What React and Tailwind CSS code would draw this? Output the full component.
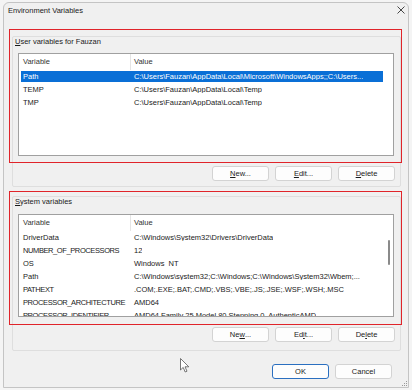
const userVars = [
  { name: 'Path', value: 'C:\\Users\\Fauzan\\AppData\\Local\\Microsoft\\WindowsApps;;C:\\Users...', selected: true },
  { name: 'TEMP', value: 'C:\\Users\\Fauzan\\AppData\\Local\\Temp' },
  { name: 'TMP', value: 'C:\\Users\\Fauzan\\AppData\\Local\\Temp' },
];

const systemVars = [
  { name: 'DriverData', value: 'C:\\Windows\\System32\\Drivers\\DriverData' },
  { name: 'NUMBER_OF_PROCESSORS', value: '12' },
  { name: 'OS', value: 'Windows_NT' },
  { name: 'Path', value: 'C:\\Windows\\system32;C:\\Windows;C:\\Windows\\System32\\Wbem;...' },
  { name: 'PATHEXT', value: '.COM;.EXE;.BAT;.CMD;.VBS;.VBE;.JS;.JSE;.WSF;.WSH;.MSC' },
  { name: 'PROCESSOR_ARCHITECTURE', value: 'AMD64' },
  { name: 'PROCESSOR_IDENTIFIER', value: 'AMD64 Family 25 Model 80 Stepping 0, AuthenticAMD' },
];

const Button = ({ children, primary }) => (
  <div
    className={
      'w-[57px] h-[15px] flex items-center justify-center rounded-[3px] bg-[#fdfdfd] text-[#1b1b1b] ' +
      (primary ? 'border border-[#2a6fc0]' : 'border border-[#d3d3d3]')
    }
  >
    {children}
  </div>
);

const isCaps = (s) => s === s.toUpperCase() && s.length > 4;

const VarList = ({ rows, scrollbar }) => (
  <div className="mt-[6px] h-[103px] w-[376px] border border-[#a0a0a0] bg-white flex overflow-hidden">
    <div className="w-[364px] pl-[2px] flex flex-col">
      {/* header */}
      <div className="h-[16px] shrink-0 flex text-[#333]">
        <div className="w-[109px] pl-[2px] flex items-center">Variable</div>
        <div className="flex-1 border-l border-[#e5e5e5] pl-[3px] flex items-center">Value</div>
      </div>
      {rows.map((r) => (
        <div key={r.name} className="h-[13px] shrink-0 py-[1px]">
          <div
            className={
              'h-[11px] flex items-center whitespace-nowrap overflow-hidden ' +
              (r.selected ? 'bg-[#0a6fd6] text-white' : 'text-[#1b1b1b]')
            }
          >
            <div className={'w-[109px] shrink-0 pl-[2px] ' + (isCaps(r.name) ? 'tracking-[-0.4px]' : '')}>{r.name}</div>
            <div className="pl-[4px] overflow-hidden">{r.value}</div>
          </div>
        </div>
      ))}
    </div>
    <div className="flex-1">
      {scrollbar && <div className="ml-[5px] mt-[25px] w-[2px] h-[25px] rounded-full bg-[#8a8a8a]"></div>}
    </div>
  </div>
);

const GroupBox = ({ label, children, className }) => (
  <div className={'ml-[8px] w-[389px] border border-[#dedede] rounded-[2px] px-[5px] ' + className}>
    <div className="-ml-[3px] h-[10px] leading-[10px] text-[#1b1b1b]">{label}</div>
    {children}
  </div>
);

const App = () => {
  return (
    <div
      className="relative w-[412px] h-[390px] overflow-hidden bg-[#f4f4f4] text-[7.5px] leading-none"
      style={{ fontFamily: '"Liberation Sans", Arial, sans-serif' }}
    >
      <div className="ml-[3px] mt-[2px] w-[406px] h-[386px] border border-[#c4c4c4] rounded-t-[6px] bg-[#f0f0f0] flex flex-col">
        {/* title bar */}
        <div className="h-[15px] flex items-center justify-between pl-[4px] pr-[3px] text-[#1b1b1b]">
          <span>Environment Variables</span>
          <svg width="8" height="8" viewBox="0 0 8 8" className="mt-[-1px]">
            <path d="M0.5 0.5 L7.5 7.5 M7.5 0.5 L0.5 7.5" stroke="#333" strokeWidth="0.9" />
          </svg>
        </div>

        <GroupBox label={<><span className="underline">U</span>ser variables for Fauzan</>} className="mt-[18px] pb-[5px]">
          <VarList rows={userVars} />
          <div className="mt-[10px] flex justify-end gap-[6px]">
            <Button><span className="underline">N</span>ew...</Button>
            <Button><span className="underline">E</span>dit...</Button>
            <Button><span className="underline">D</span>elete</Button>
          </div>
        </GroupBox>

        <GroupBox label={<><span className="underline">S</span>ystem variables</>} className="mt-[9px] pb-[8px] [&>div:nth-child(2)]:mt-[7px]">
          <VarList rows={systemVars} scrollbar />
          <div className="mt-[10px] flex justify-end gap-[6px]">
            <Button>Ne<span className="underline">w</span>...</Button>
            <Button>Ed<span className="underline">i</span>t...</Button>
            <Button>De<span className="underline">l</span>ete</Button>
          </div>
        </GroupBox>

        <div className="mt-[13px] flex justify-end gap-[6px] pr-[16px]">
          <Button primary>OK</Button>
          <Button>Cancel</Button>
        </div>
      </div>

      {/* red annotation boxes */}
      <div className="absolute left-[9px] top-[29px] w-[393px] h-[134px] border border-[#e0242a] pointer-events-none"></div>
      <div className="absolute left-[9px] top-[191px] w-[393px] h-[134px] border border-[#e0242a] pointer-events-none"></div>

      {/* mouse cursor */}
      <svg className="absolute left-[180px] top-[358px]" width="10" height="15" viewBox="0 0 10 15">
        <path d="M0.5 0.5 L0.5 12 L3.2 9.4 L5.2 14 L7 13.2 L5 8.8 L8.8 8.8 Z" fill="#fff" stroke="#555" strokeWidth="0.8" strokeLinejoin="round" />
      </svg>

      {/* resize grip */}
      <svg className="absolute left-[402px] top-[381px]" width="6" height="6" viewBox="0 0 6 6">
        <rect x="4" y="0" width="1" height="1" fill="#999" />
        <rect x="2" y="2" width="1" height="1" fill="#999" />
        <rect x="4" y="2" width="1" height="1" fill="#999" />
        <rect x="0" y="4" width="1" height="1" fill="#999" />
        <rect x="2" y="4" width="1" height="1" fill="#999" />
        <rect x="4" y="4" width="1" height="1" fill="#999" />
      </svg>
    </div>
  );
};

export default App;
